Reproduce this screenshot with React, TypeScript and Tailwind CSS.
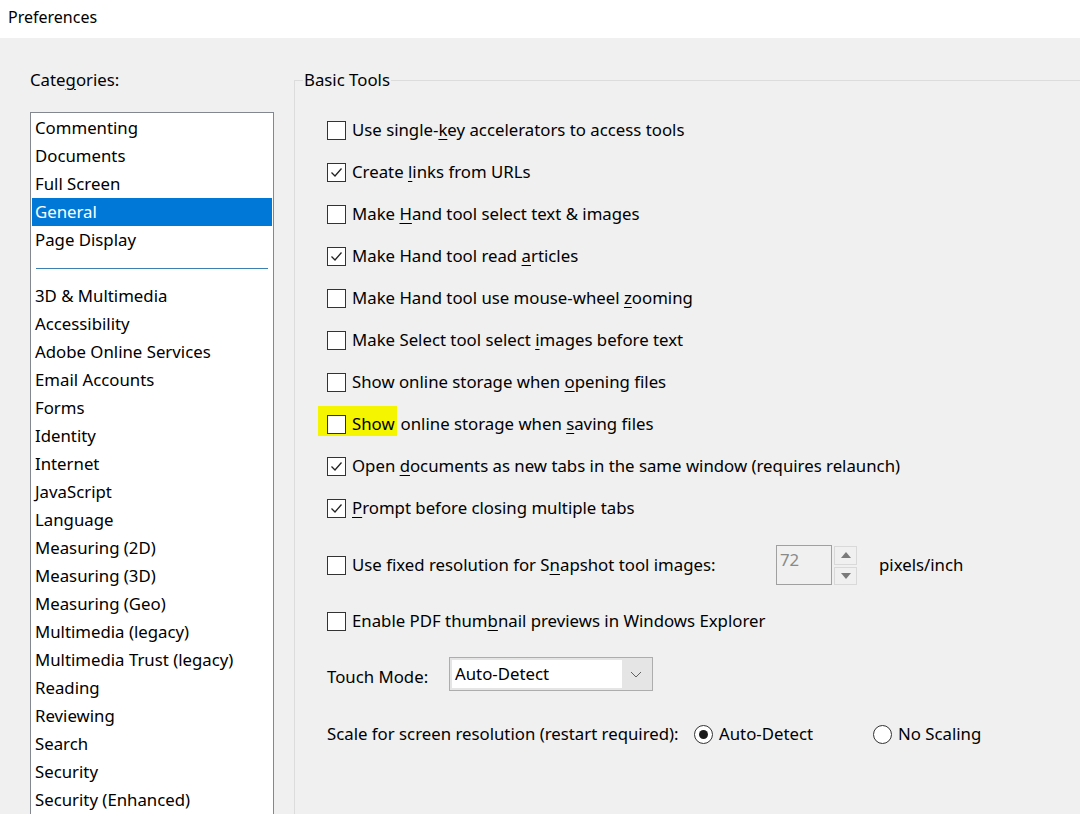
import React from "react";

const U = ({ children }: { children: React.ReactNode }) => (
  <span className="underline underline-offset-[3px] decoration-[1px]">{children}</span>
);

function CheckBox({ checked }: { checked?: boolean }) {
  return (
    <span className="inline-flex w-[19px] h-[19px] shrink-0 items-center justify-center border border-[#333333] bg-white">
      {checked && (
        <svg width="15" height="15" viewBox="0 0 15 15">
          <path d="M2.5 7.5 L6 11 L12.5 3.5" fill="none" stroke="#222" strokeWidth="1.3" />
        </svg>
      )}
    </span>
  );
}

function Row({ checked, children }: { checked?: boolean; children: React.ReactNode }) {
  return (
    <div className="h-[42px] flex items-center gap-[6px]">
      <CheckBox checked={checked} />
      <span className="whitespace-nowrap">{children}</span>
    </div>
  );
}

function Radio({ checked }: { checked?: boolean }) {
  return (
    <span className="inline-flex w-[19px] h-[19px] shrink-0 items-center justify-center rounded-full border border-[#333333] bg-white">
      {checked && <span className="w-[9px] h-[9px] rounded-full bg-[#1a1a1a]" />}
    </span>
  );
}

const categoriesTop = ["Commenting", "Documents", "Full Screen", "General", "Page Display"];
const categoriesBottom = [
  "3D & Multimedia",
  "Accessibility",
  "Adobe Online Services",
  "Email Accounts",
  "Forms",
  "Identity",
  "Internet",
  "JavaScript",
  "Language",
  "Measuring (2D)",
  "Measuring (3D)",
  "Measuring (Geo)",
  "Multimedia (legacy)",
  "Multimedia Trust (legacy)",
  "Reading",
  "Reviewing",
  "Search",
  "Security",
  "Security (Enhanced)",
];

export default function App() {
  return (
    <div
      className="w-[1080px] h-[814px] overflow-hidden bg-[#f0f0f0] text-[#000] flex flex-col text-[16.8px]"
      style={{ fontFamily: '"Noto Sans", "Open Sans", sans-serif' }}
    >
      <div className="h-[38px] shrink-0 bg-white flex items-center pl-[8px] pb-[4px] text-[16px]">Preferences</div>
      <div className="flex flex-1 min-h-0">
        <div className="w-[294px] shrink-0 pl-[30px] flex flex-col">
          <div className="mt-[28px] h-[28px] leading-[28px]">
            Cate<U>g</U>ories:
          </div>
          <div className="mt-[18px] w-[244px] flex-1 border border-[#828790] border-b-0 bg-white p-[1px] overflow-hidden">
            {categoriesTop.map((c) => (
              <div
                key={c}
                className={
                  "h-[28px] leading-[28px] px-[3px] whitespace-nowrap " +
                  (c === "General" ? "bg-[#0078d7] text-white" : "")
                }
              >
                {c}
              </div>
            ))}
            <div className="h-[28px] flex items-center px-[4px]">
              <div className="h-px w-full bg-[#3c7fb1]" />
            </div>
            {categoriesBottom.map((c) => (
              <div key={c} className="h-[28px] leading-[28px] px-[3px] whitespace-nowrap">
                {c}
              </div>
            ))}
          </div>
        </div>
        <fieldset className="flex-1 mt-[28px] border-l border-t border-[#dcdcdc] border-r-0 border-b-0">
          <legend className="ml-[8px] px-[1px] h-[28px] leading-[28px]">Basic Tools</legend>
          <div className="pl-[32px] pt-[15px] flex flex-col">
            <Row>
              Use single-<U>k</U>ey accelerators to access tools
            </Row>
            <Row checked>
              Create <U>l</U>inks from URLs
            </Row>
            <Row>
              Make <U>H</U>and tool select text &amp; images
            </Row>
            <Row checked>
              Make Hand tool read <U>a</U>rticles
            </Row>
            <Row>
              Make Hand tool use mouse-wheel <U>z</U>ooming
            </Row>
            <Row>
              Make Select tool select <U>i</U>mages before text
            </Row>
            <Row>
              Show online storage when <U>o</U>pening files
            </Row>
            <div className="h-[42px] flex items-center whitespace-nowrap">
              <span className="inline-flex items-center bg-[#f5f500] -ml-[9px] pl-[9px] pr-[2px] h-[30px] -mt-[6px]">
                <span className="mt-[6px] inline-flex items-center gap-[6px]">
                  <CheckBox />
                  <span>Show</span>
                </span>
              </span>
              <span className="ml-[4px]">
                online storage when <U>s</U>aving files
              </span>
            </div>
            <Row checked>
              Open <U>d</U>ocuments as new tabs in the same window (requires relaunch)
            </Row>
            <Row checked>
              <U>P</U>rompt before closing multiple tabs
            </Row>

            <div className="mt-[15px] h-[42px] flex items-center">
              <CheckBox />
              <span className="ml-[6px] w-[424px] whitespace-nowrap">
                Use fixed resolution for S<U>n</U>apshot tool images:
              </span>
              <div className="w-[56px] h-[40px] border border-[#a0a0a0] bg-[#f0f0f0] text-[#8a8a8a] pl-[3px] leading-[28px]">
                72
              </div>
              <div className="ml-[2px] flex flex-col gap-[2px]">
                <div className="w-[23px] h-[19px] border border-[#d9d9d9] flex items-center justify-center">
                  <svg width="10" height="6" viewBox="0 0 10 6">
                    <path d="M0 6 L5 0 L10 6 Z" fill="#7a7a7a" />
                  </svg>
                </div>
                <div className="w-[23px] h-[18px] border border-[#d9d9d9] flex items-center justify-center">
                  <svg width="10" height="6" viewBox="0 0 10 6">
                    <path d="M0 0 L5 6 L10 0 Z" fill="#7a7a7a" />
                  </svg>
                </div>
              </div>
              <span className="ml-[22px]">pixels/inch</span>
            </div>

            <div className="mt-[14px]">
              <Row>
                Enable PDF thum<U>b</U>nail previews in Windows Explorer
              </Row>
            </div>

            <div className="mt-[15px] h-[34px] flex items-center">
              <span className="w-[122px] pt-[5px]">Touch Mode:</span>
              <div className="w-[204px] h-[34px] border border-[#adadad] bg-[#e5e5e5] flex items-stretch p-[2px]">
                <div className="flex-1 bg-white pl-[3px] leading-[27px]">Auto-Detect</div>
                <div className="w-[28px] flex items-center justify-center">
                  <svg width="12" height="7" viewBox="0 0 12 7">
                    <path d="M1 1 L6 6 L11 1" fill="none" stroke="#606060" strokeWidth="1" />
                  </svg>
                </div>
              </div>
            </div>

            <div className="mt-[22px] h-[42px] flex items-center whitespace-nowrap">
              <span className="w-[367px]">Scale for screen resolution (restart required):</span>
              <Radio checked />
              <span className="ml-[6px] w-[154px]">Auto-Detect</span>
              <Radio />
              <span className="ml-[6px]">No Scaling</span>
            </div>
          </div>
        </fieldset>
      </div>
    </div>
  );
}
